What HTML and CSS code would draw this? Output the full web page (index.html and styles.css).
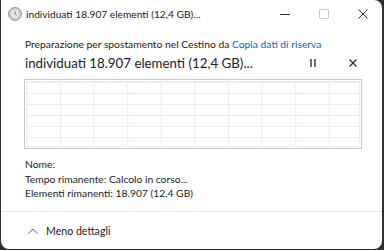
FILE: index.html
```html
<!DOCTYPE html>
<html lang="it">
<head>
  <meta charset="UTF-8" />
  <title>individuati 18.907 elementi (12,4 GB)...</title>
  <link rel="stylesheet" href="styles.css">
</head>
<body>
  <div class="window">
    <!-- Title bar -->
    <div class="titlebar">
      <svg class="app-icon" width="14" height="14" viewBox="0 0 14 14">
        <circle cx="7" cy="7" r="6.5" fill="#c9c9c9" stroke="#9a9a9a" stroke-width="1"/>
        <circle cx="7" cy="7" r="4.2" fill="#e8e8e8"/>
        <path d="M7 4.2 V7 L8.8 8.2" stroke="#8a8a8a" stroke-width="1" fill="none"/>
      </svg>
      <span class="title">individuati 18.907 elementi (12,4 GB)...</span>
      <div class="win-btns">
        <span class="win-btn">
          <svg width="10" height="10" viewBox="0 0 10 10"><path d="M0 5.5 H10" stroke="#333" stroke-width="1"/></svg>
        </span>
        <span class="win-btn">
          <svg width="10" height="10" viewBox="0 0 10 10"><rect x="0.5" y="0.5" width="9" height="9" rx="1" fill="none" stroke="#c4c4c4" stroke-width="1"/></svg>
        </span>
        <span class="win-btn">
          <svg width="10" height="10" viewBox="0 0 10 10"><path d="M0.5 0.5 L9.5 9.5 M9.5 0.5 L0.5 9.5" stroke="#333" stroke-width="1"/></svg>
        </span>
      </div>
    </div>

    <!-- Content -->
    <div class="content">
      <p class="subtitle">Preparazione per spostamento nel Cestino da <span class="link">Copia dati di riserva</span></p>
      <div class="headline">
        <span class="headline-text">individuati 18.907 elementi (12,4 GB)...</span>
        <span class="ctrl pause">
          <svg width="8" height="8" viewBox="0 0 8 8"><path d="M2 0 V8 M6 0 V8" stroke="#222" stroke-width="1.3"/></svg>
        </span>
        <span class="ctrl cancel">
          <svg width="8" height="8" viewBox="0 0 8 8"><path d="M0.5 0.5 L7.5 7.5 M7.5 0.5 L0.5 7.5" stroke="#222" stroke-width="1.1"/></svg>
        </span>
      </div>

      <div class="graph">
        <div class="grid"></div>
      </div>

      <div class="details">
        <p>Nome:</p>
        <p>Tempo rimanente: Calcolo in corso...</p>
        <p>Elementi rimanenti: 18.907 (12,4 GB)</p>
      </div>
    </div>

    <!-- Footer -->
    <div class="footer">
      <svg class="chevron" width="10" height="6" viewBox="0 0 10 6"><path d="M0.5 5.5 L5 1 L9.5 5.5" stroke="#666" stroke-width="1" fill="none"/></svg>
      <span>Meno dettagli</span>
    </div>
  </div>
</body>
</html>
```

FILE: styles.css
```css
* {
  margin: 0;
  padding: 0;
  box-sizing: border-box;
}
body {
  background: #2e2e2e;
  font-family: Lato, "Noto Sans", sans-serif;
  color: #1b1b1b;
  width: 384px;
  height: 250px;
  overflow: hidden;
}

.window {
  width: 381px;
  height: 249px;
  margin-left: 1px;
  background: #fff;
  border-radius: 0 8px 8px 8px;
  display: flex;
  flex-direction: column;
  overflow: hidden;
}

/* Title bar */
.titlebar {
  height: 27px;
  display: flex;
  align-items: center;
  padding-left: 7px;
}
.app-icon {
  flex: none;
}
.title {
  margin-left: 4px;
  font-size: 10.2px;
  white-space: nowrap;
}
.win-btns {
  margin-left: auto;
  display: flex;
}
.win-btn {
  width: 39px;
  height: 27px;
  display: flex;
  align-items: center;
  justify-content: center;
}

/* Content */
.content {
  padding: 10px 23px 0 24px;
  flex: 1;
}
.subtitle {
  font-size: 10.3px;
  line-height: 14px;
  white-space: nowrap;
}
.link {
  color: #0066b8;
}
.headline {
  display: flex;
  align-items: center;
  margin-top: 1px;
  height: 22px;
}
.headline-text {
  font-size: 13.3px;
  white-space: nowrap;
  flex: 1;
}
.ctrl {
  display: flex;
}
.pause {
  margin-right: 32px;
}
.cancel {
  margin-right: 2px;
}

.graph {
  margin-top: 5px;
  width: 338px;
  height: 70px;
  border: 1px solid #c9c9c9;
  padding: 1px;
  margin-left: -1px;
}
.grid {
  width: 100%;
  height: 100%;
  border: 1px solid #ececec;
  background-image:
    linear-gradient(to right, #ececec 1px, transparent 1px),
    linear-gradient(to bottom, #ececec 1px, transparent 1px);
  background-size: 33.6px 100%, 100% 11px;
  background-position: 33px 0, 0 11px;
}

.details {
  margin-top: 8px;
  font-size: 10.3px;
  line-height: 14.5px;
}

/* Footer */
.footer {
  height: 38px;
  border-top: 1px solid #ececec;
  display: flex;
  align-items: center;
  padding-left: 27px;
  font-size: 10.6px;
}
.chevron {
  margin-right: 8px;
}
```
